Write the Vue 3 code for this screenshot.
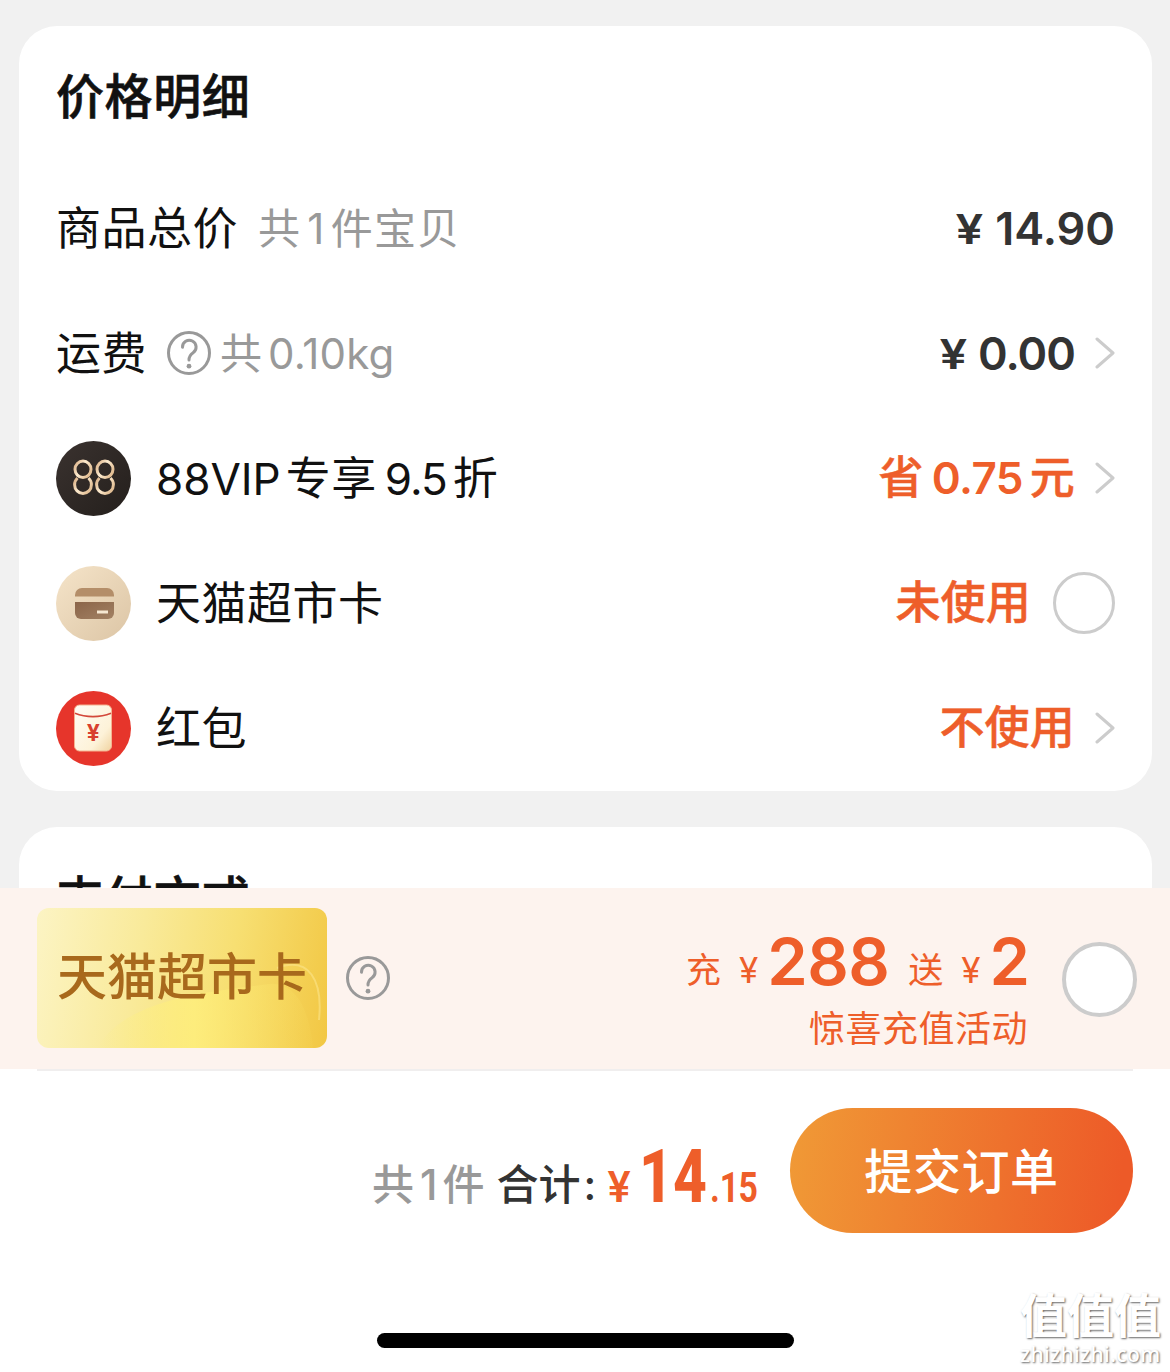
<script setup>
</script>

<template>
  <div class="screen">
    <div class="content">
      <section class="card">
        <h2 class="title">价格明细</h2>

        <div class="row">
          <span class="label">商品总价</span>
          <span class="note total-note">共<span class="one">1</span>件宝贝</span>
          <span class="price"><span class="yen">¥</span>14.90</span>
        </div>

        <div class="row">
          <span class="label">运费</span>
          <svg class="help help-fee" viewBox="0 0 44 44">
            <circle cx="22" cy="22" r="20.500" />
            <path d="M15.500 16.300a6.800 6.800 0 1 1 10.600 5.400c-2.700 1.900-4.100 3.600-4.100 7.200" />
            <circle class="dot" cx="22" cy="35.200" r="2.400" />
          </svg>
          <span class="note fee-note">共<span class="kg">0.10kg</span></span>
          <span class="price zero"><span class="yen">¥</span>0.00</span>
          <svg class="chevron" viewBox="0 0 20 32"><path d="M2 2l16 14L2 30" /></svg>
        </div>

        <div class="row">
          <svg class="icon" viewBox="0 0 75 75">
            <defs>
              <linearGradient id="dark" x1="0" y1="0" x2="1" y2="1">
                <stop offset="0" stop-color="#3a322f" />
                <stop offset="1" stop-color="#241f1c" />
              </linearGradient>
              <linearGradient id="ring" x1="0" y1="0" x2="1" y2="0.600">
                <stop offset="0" stop-color="#d9ae83" />
                <stop offset="0.500" stop-color="#fdebcf" />
                <stop offset="1" stop-color="#e3bf95" />
              </linearGradient>
            </defs>
            <circle cx="37.500" cy="37.500" r="37.500" fill="url(#dark)" />
            <g fill="none" stroke="url(#ring)" stroke-width="3">
              <ellipse cx="27" cy="28.300" rx="8" ry="8.200" />
              <ellipse cx="49" cy="28.300" rx="8" ry="8.200" />
              <path d="M21.500 37c-2 1.900-2.900 4-2.900 6.700a8.400 8.700 0 0 0 16.800 0c0-2.700-.9-4.800-2.900-6.700" />
              <path d="M43.500 37c-2 1.900-2.900 4-2.900 6.700a8.400 8.700 0 0 0 16.800 0c0-2.700-.9-4.800-2.900-6.700" />
            </g>
          </svg>
          <span class="label with-icon"><span class="vip">88VIP</span><span class="g1">专享</span><span class="g2">9.5</span><span class="g3">折</span></span>
          <span class="value">省<span class="save">0.75</span>元</span>
          <svg class="chevron" viewBox="0 0 20 32"><path d="M2 2l16 14L2 30" /></svg>
        </div>

        <div class="row">
          <svg class="icon" viewBox="0 0 75 75">
            <defs>
              <linearGradient id="sand" x1="0" y1="0" x2="1" y2="1">
                <stop offset="0" stop-color="#f5e4c9" />
                <stop offset="1" stop-color="#dcc5a5" />
              </linearGradient>
              <linearGradient id="brown" x1="0" y1="0" x2="1" y2="1">
                <stop offset="0" stop-color="#8b6549" />
                <stop offset="1" stop-color="#a28163" />
              </linearGradient>
            </defs>
            <circle cx="37.500" cy="37.500" r="37.500" fill="url(#sand)" />
            <path d="M19 30.500v-1.500a7 7 0 0 1 7-7h25a7 7 0 0 1 7 7v1.500z" fill="#b48e69" />
            <path d="M19 36h39v11a6 6 0 0 1-6 6H25a6 6 0 0 1-6-6z" fill="url(#brown)" />
            <rect x="41" y="44.500" width="11" height="3" fill="#f6e8d2" />
          </svg>
          <span class="label with-icon">天猫超市卡</span>
          <span class="value">未使用</span>
          <span class="radio"></span>
        </div>

        <div class="row">
          <svg class="icon" viewBox="0 0 75 75">
            <defs>
              <linearGradient id="cream" x1="0" y1="0" x2="1" y2="1">
                <stop offset="0" stop-color="#fffdf6" />
                <stop offset="0.700" stop-color="#fdf2d8" />
                <stop offset="1" stop-color="#f0d3a0" />
              </linearGradient>
            </defs>
            <circle cx="37.500" cy="37.500" r="37.500" fill="#e6352b" />
            <rect x="18.500" y="14" width="37" height="46" rx="5" fill="url(#cream)" stroke="#f5b391" stroke-width="1" />
            <path d="M19 22.300c11 4.400 25 4.400 36 0" fill="none" stroke="#d3483a" stroke-width="1.600" />
            <text x="37.300" y="49.500" text-anchor="middle" class="packet-yen">¥</text>
          </svg>
          <span class="label with-icon">红包</span>
          <span class="value">不使用</span>
          <svg class="chevron" viewBox="0 0 20 32"><path d="M2 2l16 14L2 30" /></svg>
        </div>
      </section>

      <section class="card pay">
        <h2 class="title">支付方式</h2>
      </section>
    </div>

    <div class="promo">
      <div class="gold">
        <svg class="swirl" viewBox="0 0 290 140">
          <defs>
            <linearGradient id="shine" x1="0" y1="0" x2="1" y2="0">
              <stop offset="0" stop-color="#fff07a" stop-opacity="0" />
              <stop offset="0.450" stop-color="#fff07c" stop-opacity="0.750" />
              <stop offset="1" stop-color="#f9df62" stop-opacity="0.100" />
            </linearGradient>
          </defs>
          <path d="M60 140C90 90 170 84 232 76c24-2 40 20 44 64z" fill="url(#shine)" />
          <path d="M240 60c32-12 46 12 42 52" fill="none" stroke="#fbe58a" stroke-width="2" opacity="0.600" />
        </svg>
        <span class="gold-text">天猫超市卡</span>
      </div>
      <svg class="help help-promo" viewBox="0 0 44 44">
        <circle cx="22" cy="22" r="20.500" />
        <path d="M15.500 16.300a6.800 6.800 0 1 1 10.600 5.400c-2.700 1.900-4.100 3.600-4.100 7.200" />
        <circle class="dot" cx="22" cy="35.200" r="2.400" />
      </svg>
      <div class="offer">
        <div class="offer-main">
          <span class="up">充</span><span class="up y1">¥</span><b class="n288">288</b><span class="up send">送</span><span class="up y1">¥</span><b class="n2">2</b>
        </div>
        <div class="offer-sub">惊喜充值活动</div>
      </div>
      <span class="radio big"></span>
    </div>

    <div class="footer">
      <div class="divider"></div>
      <div class="submit-row">
        <div class="sum">
          <span class="count">共<span class="one-sum">1</span>件</span>
          <span class="sum-label">合计<span class="colon">:</span></span>
          <span class="sum-yen">¥</span>
          <span class="int"><span class="squeeze">14</span></span>
          <span class="dec"><span class="squeeze">.<span class="cents">15</span></span></span>
        </div>
        <button class="submit">提交订单</button>
      </div>
      <div class="home-bar"></div>
      <div class="watermark">
        <div class="wm-name">值值值</div>
        <div class="wm-url">zhizhizhi.com</div>
      </div>
    </div>
  </div>
</template>

<style>
body {
  margin: 0;
  background: #fff;
}
</style>

<style scoped>
.screen {
  width: 1170px;
  height: 1372px;
  overflow: hidden;
  background: #fff;
  font-family: Inter, "Noto Sans CJK SC", sans-serif;
  color: #111;
  white-space: nowrap;
}
.content {
  box-sizing: border-box;
  height: 888px;
  overflow: hidden;
  padding: 26px 18px 0 19px;
  background: #f1f1f1;
}
.card {
  box-sizing: border-box;
  height: 765px;
  padding: 0 37px;
  border-radius: 38px;
  background: #fff;
}
.pay {
  margin-top: 36px;
}
.title {
  box-sizing: border-box;
  height: 140px;
  margin: 0;
  padding-top: 41px;
  font-size: 48px;
  font-weight: 500;
  line-height: 60px;
  letter-spacing: 0.600px;
  -webkit-text-stroke: 0.600px #111;
}
.pay .title {
  padding-top: 42px;
}
.row {
  display: flex;
  align-items: center;
  height: 125px;
}
.label {
  font-size: 45px;
  line-height: 60px;
  letter-spacing: 0.500px;
}
.with-icon {
  margin-left: 25px;
}
.note {
  font-size: 42px;
  line-height: 60px;
  color: #999;
}
.total-note {
  margin-left: 20px;
  letter-spacing: 1.300px;
}
.fee-note {
  margin-left: 9px;
}
.one {
  margin: 0 5px 0 6px;
}
.kg {
  margin-left: 6px;
  letter-spacing: 0.200px;
}
.price,
.value {
  margin-left: auto;
  line-height: 60px;
}
.price {
  display: flex;
  align-items: center;
  font-size: 45px;
  font-weight: 600;
  color: #333;
}
.zero {
  letter-spacing: -1px;
  padding-right: 0;
}
.yen {
  display: block;
  margin-right: 12px;
  font-size: 41px;
  transform: scaleX(1.200);
  transform-origin: right;
}
.value {
  margin-bottom: 1px;
  font-size: 45px;
  font-weight: 500;
  letter-spacing: 0.200px;
  color: #ee5e2a;
  -webkit-text-stroke: 0.500px #ee5e2a;
}
.vip {
  font-size: 44px;
  letter-spacing: 0;
}
.g1 {
  margin-left: 5px;
}
.g2 {
  margin-left: 8px;
  font-size: 44px;
  letter-spacing: -1px;
}
.g3 {
  margin-left: 6px;
}
.save {
  margin: 0 7px 0 8px;
  font-size: 44px;
  font-weight: 600;
  letter-spacing: -0.600px;
  -webkit-text-stroke: 0;
}
.icon {
  width: 75px;
  height: 75px;
}
.packet-yen {
  font: 700 23px Inter, sans-serif;
  fill: #d8402f;
}
.help {
  width: 44px;
  height: 44px;
  fill: none;
  stroke: #999;
  stroke-width: 3;
  stroke-linecap: round;
}
.help .dot {
  fill: #999;
  stroke: none;
}
.help-fee {
  margin: 0 0 2px 20px;
}
.help-promo {
  margin-left: 19px;
}
.chevron {
  width: 20px;
  height: 32px;
  margin: 0 0 2px 20px;
  fill: none;
  stroke: #ccc;
  stroke-width: 3;
  stroke-linecap: round;
  stroke-linejoin: round;
}
.radio {
  box-sizing: border-box;
  width: 62px;
  height: 62px;
  margin: 0 0 2px 22px;
  border: 3px solid #ccc;
  border-radius: 50%;
  background: #fff;
}
.promo {
  box-sizing: border-box;
  display: flex;
  align-items: center;
  height: 181px;
  padding: 0 33px 1px 37px;
  background: #fdf3ee;
}
.gold {
  box-sizing: border-box;
  display: flex;
  align-items: center;
  justify-content: center;
  position: relative;
  width: 290px;
  height: 140px;
  padding-bottom: 3px;
  border-radius: 12px;
  overflow: hidden;
  background: linear-gradient(100deg, #fcf4c4 0%, #f9ea9a 35%, #f7df72 65%, #f2c743 100%);
}
.swirl {
  position: absolute;
  inset: 0;
}
.gold-text {
  position: relative;
  font-size: 50px;
  font-weight: 500;
  line-height: 60px;
  color: #a8691c;
}
.offer {
  align-self: flex-start;
  margin-left: auto;
  margin-right: 34px;
  padding-top: 38px;
  color: #ee5e2a;
  text-align: right;
}
.offer-main {
  height: 78px;
  font-size: 35px;
  line-height: 72px;
}
.up {
  vertical-align: 2px;
}
.offer-main b {
  font-size: 65px;
  font-weight: 600;
}
.y1 {
  margin: 0 9px 0 18px;
}
.send {
  margin-left: 19px;
}
.n288 {
  letter-spacing: -0.600px;
}
.offer-main .n2 {
  margin-right: -2px;
}
.offer-sub {
  height: 50px;
  font-size: 36px;
  line-height: 50px;
  letter-spacing: 0.500px;
}
.big {
  width: 75px;
  height: 75px;
  margin: 2px 0 0;
  border-width: 4px;
}
.footer {
  position: relative;
  height: 303px;
  background: #fff;
}
.divider {
  height: 2px;
  margin: 0 37px;
  background: #f0eeee;
}
.submit-row {
  display: flex;
  justify-content: flex-end;
  padding: 37px 37px 0 0;
}
.sum {
  display: flex;
  align-items: baseline;
  height: 125px;
  margin-right: 33px;
  font-size: 42px;
  line-height: 136px;
  color: #333;
  font-weight: 500;
}
.count,
.sum-label {
  transform: translateY(-2px);
}
.count {
  color: #999;
}
.one-sum {
  margin: 0 5px 0 6px;
}
.sum-label {
  margin-left: 12px;
}
.colon {
  margin-left: 3px;
}
.sum-yen {
  margin-left: 11px;
  font-weight: 600;
  color: #ee5e2a;
}
.int,
.dec {
  font-family: Roboto, sans-serif;
  font-weight: 800;
  color: #ee5e2a;
}
.int {
  width: 66px;
  margin-left: 8px;
  font-size: 75px;
}
.dec {
  width: 52px;
  font-size: 43px;
  font-weight: 700;
}
.cents {
  letter-spacing: -1px;
}
.dec .squeeze {
  margin-left: 5px;
}
.squeeze {
  display: inline-block;
  transform: scaleX(0.785);
  transform-origin: left;
}
.submit {
  width: 343px;
  height: 125px;
  padding: 0;
  border: 0;
  border-radius: 63px;
  background: linear-gradient(97deg, #f09a36 0%, #ed5a28 95%);
  color: #fff;
  font-family: inherit;
  font-size: 48px;
  font-weight: 500;
  line-height: 127px;
  letter-spacing: 0.600px;
}
.home-bar {
  width: 417px;
  height: 15px;
  margin: 100px auto 0;
  border-radius: 8px;
  background: #000;
}
.watermark {
  position: absolute;
  right: 9px;
  bottom: 6px;
  color: #fff;
  text-shadow: 1px 1px 2px rgba(0, 0, 0, 0.600);
}
.wm-name {
  font-size: 47px;
  font-weight: 700;
  line-height: 52px;
}
.wm-url {
  font-family: "Noto Sans", sans-serif;
  font-size: 21px;
  font-weight: 500;
  line-height: 24px;
  letter-spacing: 0.400px;
}
</style>
